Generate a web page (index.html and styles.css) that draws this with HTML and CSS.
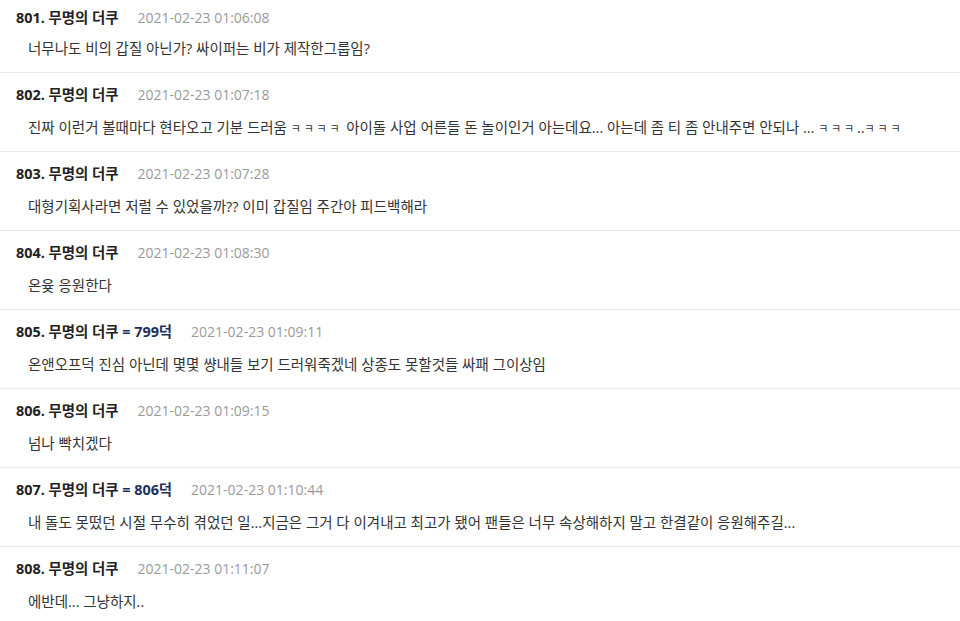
FILE: index.html
```html
<!DOCTYPE html>
<html lang="ko">
<head>
<meta charset="utf-8">
<link rel="stylesheet" href="styles.css">
</head>
<body>
<div class="list">
  <div class="post">
    <div class="head"><span class="name">801. 무명의 더쿠</span><span class="date">2021-02-23 01:06:08</span></div>
    <div class="text">너무나도 비의 갑질 아닌가? 싸이퍼는 비가 제작한그룹임?</div>
  </div>
  <div class="post">
    <div class="head"><span class="name">802. 무명의 더쿠</span><span class="date">2021-02-23 01:07:18</span></div>
    <div class="text">진짜 이런거 볼때마다 현타오고 기분 드러움 <span class="small">ㅋㅋㅋㅋ</span> 아이돌 사업 어른들 돈 놀이인거 아는데요... 아는데 좀 티 좀 안내주면 안되나 ... <span class="small">ㅋㅋㅋ</span>..<span class="small">ㅋㅋㅋ</span></div>
  </div>
  <div class="post">
    <div class="head"><span class="name">803. 무명의 더쿠</span><span class="date">2021-02-23 01:07:28</span></div>
    <div class="text">대형기획사라면 저럴 수 있었을까?? 이미 갑질임 주간아 피드백해라</div>
  </div>
  <div class="post">
    <div class="head"><span class="name">804. 무명의 더쿠</span><span class="date">2021-02-23 01:08:30</span></div>
    <div class="text">온윶 응원한다</div>
  </div>
  <div class="post">
    <div class="head"><span class="name">805. 무명의 더쿠 <span class="reply">= 799덕</span></span><span class="date">2021-02-23 01:09:11</span></div>
    <div class="text">온앤오프덕 진심 아닌데 몇몇 썅내들 보기 드러워죽겠네 상종도 못할것들 싸패 그이상임</div>
  </div>
  <div class="post">
    <div class="head"><span class="name">806. 무명의 더쿠</span><span class="date">2021-02-23 01:09:15</span></div>
    <div class="text">넘나 빡치겠다</div>
  </div>
  <div class="post">
    <div class="head"><span class="name">807. 무명의 더쿠 <span class="reply">= 806덕</span></span><span class="date">2021-02-23 01:10:44</span></div>
    <div class="text">내 돌도 못떴던 시절 무수히 겪었던 일...지금은 그거 다 이겨내고 최고가 됐어 팬들은 너무 속상해하지 말고 한결같이 응원해주길...</div>
  </div>
  <div class="post">
    <div class="head"><span class="name">808. 무명의 더쿠</span><span class="date">2021-02-23 01:11:07</span></div>
    <div class="text">에반데... 그냥하지..</div>
  </div>
</div>
</body>
</html>
```
FILE: styles.css
```css
html, body {
  margin: 0;
  padding: 0;
  background: #fff;
}
body {
  font-family: "Open Sans", "Noto Sans CJK KR", sans-serif;
  color: #333;
}
.list {
  display: flex;
  flex-direction: column;
}
.post {
  padding: 13px 16px 14px;
  border-bottom: 1px solid #e8e8e8;
}
.post:first-child {
  padding-top: 9px;
}
.post:first-child .text {
  margin-top: 13px;
}
.head {
  display: flex;
  align-items: center;
  height: 18px;
  line-height: 18px;
  gap: 19px;
}
.name {
  font-size: 14.4px;
  font-weight: 700;
  color: #222;
  white-space: nowrap;
}
.reply {
  color: #1c2f5c;
}
.date {
  font-size: 14px;
  color: #9a9a9a;
}
.text {
  margin-top: 15px;
  padding-left: 12px;
  height: 18px;
  line-height: 18px;
  font-size: 14.5px;
  color: #333;
  white-space: nowrap;
}
.small {
  font-size: 11px;
  letter-spacing: 2.8px;
}
```
